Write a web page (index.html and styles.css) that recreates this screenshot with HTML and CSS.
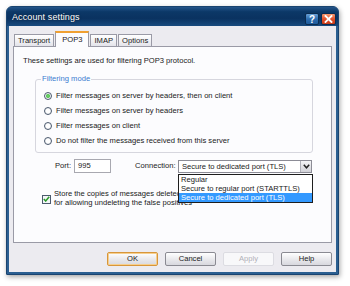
FILE: index.html
```html
<!DOCTYPE html>
<html>
<head>
<meta charset="utf-8">
<link rel="stylesheet" href="styles.css">
</head>
<body>
<div class="window">
  <div class="titlebar">
    <span class="title">Account settings</span>
    <span class="tbtns">
      <span class="tb help">?</span>
      <span class="tb close"><svg width="9" height="8" viewBox="0 0 9 8"><path d="M1.5 1 L7.5 7 M7.5 1 L1.5 7" stroke="#fff" stroke-width="1.8" stroke-linecap="square"/></svg></span>
    </span>
  </div>
  <div class="client">
    <div class="tabs">
      <span class="tab">Transport</span>
      <span class="tab active">POP3</span>
      <span class="tab">IMAP</span>
      <span class="tab">Options</span>
    </div>
    <div class="panel">
      <p class="intro">These settings are used for filtering POP3 protocol.</p>
      <fieldset class="group">
        <legend>Filtering mode</legend>
        <div class="radio"><span class="rb on"></span>Filter messages on server by headers, then on client</div>
        <div class="radio"><span class="rb"></span>Filter messages on server by headers</div>
        <div class="radio"><span class="rb"></span>Filter messages on client</div>
        <div class="radio"><span class="rb"></span>Do not filter the messages received from this server</div>
      </fieldset>
      <div class="portrow">
        <span class="lbl port-lbl">Port:</span>
        <span class="input">995</span>
        <span class="lbl conn-lbl">Connection:</span>
        <div class="combo-wrap">
          <div class="combo"><span class="combo-text">Secure to dedicated port (TLS)</span><span class="arrow"><svg width="7" height="5" viewBox="0 0 7 5"><path d="M0.8 0.8 L3.5 3.8 L6.2 0.8" fill="none" stroke="#222" stroke-width="1.5"/></svg></span></div>
          <div class="droplist">
            <div class="opt">Regular</div>
            <div class="opt">Secure to regular port (STARTTLS)</div>
            <div class="opt sel">Secure to dedicated port (TLS)</div>
          </div>
        </div>
      </div>
      <div class="checkrow">
        <span class="cb"><svg width="7" height="6" viewBox="0 0 7 6"><path d="M0.8 3 L2.7 5 L6.2 0.8" fill="none" stroke="#2a9a2a" stroke-width="1.5"/></svg></span>
        <span class="cbtext">Store the copies of messages deleted<br>for allowing undeleting the false positives</span>
      </div>
    </div>
    <div class="buttons">
      <span class="btn default">OK</span>
      <span class="btn">Cancel</span>
      <span class="btn disabled">Apply</span>
      <span class="btn">Help</span>
    </div>
  </div>
</div>
</body>
</html>
```
FILE: styles.css
```css
html, body { margin: 0; padding: 0; background: #ffffff; }
body {
  width: 350px; height: 286px; overflow: hidden;
  font-family: "Liberation Sans", Arial, sans-serif;
  font-size: 7.6px; color: #1a1a1a;
}
.window {
  margin: 6px 0 0 6px;
  width: 333px; height: 269px;
  box-sizing: border-box;
  background: #2b5f91;
  border: 1px solid #1a4470;
  border-radius: 6px 6px 1px 1px;
  box-shadow: 1px 2px 5px rgba(0,0,0,0.35);
  display: flex; flex-direction: column;
}
.titlebar {
  height: 19px; flex: none;
  background: linear-gradient(#24558a 0, #0c3867 25%, #0a3260 60%, #184a7e 100%);
  border-radius: 5px 5px 0 0;
  display: flex; align-items: center; justify-content: space-between;
  padding: 0 2px 0 5px;
}
.title {
  color: #fff; font-size: 9px; letter-spacing: 0.1px;
  text-shadow: 0 0 2px rgba(0,0,0,0.6);
  margin-top: 1px;
}
.tbtns { display: flex; gap: 2px; margin-top: 5px; }
.tb {
  width: 14px; height: 12px; box-sizing: border-box;
  display: flex; align-items: center; justify-content: center;
  border: 1px solid #0b2c50; border-radius: 2px;
}
.help {
  background: linear-gradient(#6aa0d6, #2d6db0 50%, #1e5a9a);
  color: #fff; font-weight: bold; font-size: 10px;
}
.close {
  width: 15px;
  background: linear-gradient(#f59a72, #e2502a 50%, #c83a18);
}
.client {
  flex: 1;
  margin: 0 2px 2px 2px;
  background: #ecebf0;
  padding: 5px 4px 0 4px;
  display: flex; flex-direction: column;
}
.tabs { display: flex; align-items: flex-end; height: 15px; padding-left: 1px; }
.tab {
  height: 12px; box-sizing: border-box;
  border: 1px solid #9a9aa6; border-bottom: none;
  background: linear-gradient(#ffffff, #e4e4ea);
  padding: 0 3px; line-height: 12px;
  margin-right: 1px; font-size: 7.6px;
}
.tab.active {
  background: #fcfcfe;
  border-top: 2px solid #f0a030;
  padding: 0 6px; line-height: 13px;
  margin: 0 1px -1px 0; position: relative; z-index: 1;
  height: 16px;
}
.panel {
  height: 197px; box-sizing: border-box;
  background: #fcfcfe;
  border: 1px solid #9a9aa6;
  padding-top: 9px;
}
.intro { margin: 0 0 8px 9px; height: 10px; line-height: 10px; }
.group {
  margin: 0 18px 0 21px;
  border: 1px solid #d6d6de; border-radius: 3px;
  padding: 4px 0 4px 8px;
}
.group legend {
  color: #3a7bd0; padding: 0 1px; margin-left: -3px;
  line-height: 10px;
}
.radio { height: 15px; display: flex; align-items: center; }
.rb {
  width: 8px; height: 8px; box-sizing: border-box;
  border: 1px solid #4c5a6e; border-radius: 50%;
  background: radial-gradient(#ffffff 40%, #dfe3ea);
  margin-right: 4px; display: flex; align-items: center; justify-content: center;
}
.rb.on::after {
  content: ""; width: 4px; height: 4px; border-radius: 50%;
  background: radial-gradient(#7ee07a, #1a9a1a);
}
.portrow {
  display: flex; align-items: center; height: 14px;
  margin-top: 6px;
}
.lbl { line-height: 10px; }
.port-lbl { margin-left: 41px; width: 19px; }
.input {
  width: 37px; height: 14px; box-sizing: border-box;
  border: 1px solid #a8a8b0; background: #fff;
  padding-left: 3px; line-height: 12px;
}
.conn-lbl { margin-left: 24px; width: 43px; }
.combo-wrap { position: relative; }
.combo {
  width: 134px; height: 13px; box-sizing: border-box;
  border: 1px solid #8c8c96; background: #fff;
  display: flex; align-items: center; justify-content: space-between;
}
.combo-text { padding-left: 3px; line-height: 11px; }
.arrow {
  width: 11px; height: 11px; box-sizing: border-box;
  background: linear-gradient(#f4f4f6, #d2d2d8);
  border-left: 1px solid #b0b0b8;
  display: flex; align-items: center; justify-content: center;
}
.droplist {
  position: absolute; left: 0; top: 14px;
  width: 135px; box-sizing: border-box;
  border: 1px solid #1e1e1e; background: #fff;
  z-index: 5;
}
.opt { height: 9px; line-height: 9px; padding-left: 2px; }
.opt.sel { background: #3399ff; color: #fff; }
.checkrow {
  display: flex; align-items: center;
  margin: 16px 0 0 28px;
}
.cb {
  width: 9px; height: 9px; box-sizing: border-box;
  border: 1px solid #4c5a6e; background: #f4f6f8;
  display: flex; align-items: center; justify-content: center;
  margin-right: 3px; margin-top: 2px;
}
.cbtext { line-height: 9px; }
.buttons {
  display: flex; justify-content: flex-end; gap: 7px;
  margin-top: 9px; padding-right: 0;
}
.btn {
  width: 51px; height: 14px; box-sizing: border-box;
  border: 1px solid #8a8a92; border-radius: 2px;
  background: linear-gradient(#ffffff, #e6e6ea 60%, #d8d8de);
  text-align: center; line-height: 12px;
}
.btn.default { border-color: #d8963a; box-shadow: inset 0 0 0 1px #f6cf8e; }
.btn.disabled { border-color: #dcdce2; background: #f8f8fa; color: #b0b0b8; }
```
